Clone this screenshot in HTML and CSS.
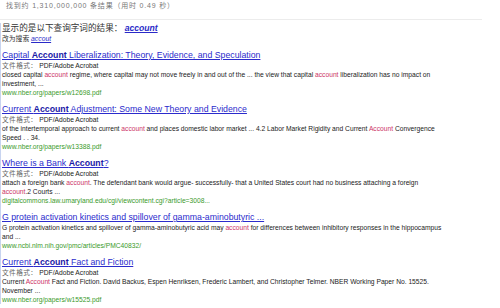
FILE: index.html
```html
<!DOCTYPE html>
<html lang="zh-CN">
<head>
    <meta charset="UTF-8">
    <title>account - 搜索结果</title>
    <link rel="stylesheet" href="styles.css">
</head>
<body>
    <div class="stats">找到约 1,310,000,000 条结果（用时 0.49 秒）</div>

    <div class="main">
        <div class="spell">显示的是以下查询字词的结果： <a href="#" class="kw">account</a></div>
        <div class="spell-alt">改为搜索 <a href="#" class="kw">accout</a></div>

        <div class="result">
            <a href="#" class="title">Capital <b>Account</b> Liberalization: Theory, Evidence, and Speculation</a>
            <div class="line"><span class="ftype">文件格式：</span> PDF/Adobe Acrobat</div>
            <div class="line">closed capital <em>account</em> regime, where capital may not move freely in and out of the ... the view that capital <em>account</em> liberalization has no impact on</div>
            <div class="line">investment, ...</div>
            <div class="line url">www.nber.org/papers/w12698.pdf</div>
        </div>

        <div class="result">
            <a href="#" class="title">Current <b>Account</b> Adjustment: Some New Theory and Evidence</a>
            <div class="line"><span class="ftype">文件格式：</span> PDF/Adobe Acrobat</div>
            <div class="line">of the intertemporal approach to current <em>account</em> and places domestic labor market ... 4.2 Labor Market Rigidity and Current <em>Account</em> Convergence</div>
            <div class="line">Speed . . 34.</div>
            <div class="line url">www.nber.org/papers/w13388.pdf</div>
        </div>

        <div class="result">
            <a href="#" class="title">Where is a Bank <b>Account</b>?</a>
            <div class="line"><span class="ftype">文件格式：</span> PDF/Adobe Acrobat</div>
            <div class="line">attach a foreign bank <em>account</em>. The defendant bank would argue- successfully- that a United States court had no business attaching a foreign</div>
            <div class="line"><em>account</em>.2 Courts ...</div>
            <div class="line url">digitalcommons.law.umaryland.edu/cgi/viewcontent.cgi?article=3008...</div>
        </div>

        <div class="result">
            <a href="#" class="title">G protein activation kinetics and spillover of gamma-aminobutyric ...</a>
            <div class="line">G protein activation kinetics and spillover of gamma-aminobutyric acid may <em>account</em> for differences between inhibitory responses in the hippocampus</div>
            <div class="line">and ...</div>
            <div class="line url">www.ncbi.nlm.nih.gov/pmc/articles/PMC40832/</div>
        </div>

        <div class="result">
            <a href="#" class="title">Current <b>Account</b> Fact and Fiction</a>
            <div class="line"><span class="ftype">文件格式：</span> PDF/Adobe Acrobat</div>
            <div class="line">Current <em>Account</em> Fact and Fiction. David Backus, Espen Henriksen, Frederic Lambert, and Christopher Telmer. NBER Working Paper No. 15525.</div>
            <div class="line">November ...</div>
            <div class="line url">www.nber.org/papers/w15525.pdf</div>
        </div>
    </div>
</body>
</html>
```

FILE: styles.css
```css
body {
    margin: 0;
    background: #fff;
    font-family: "Liberation Sans", Arial, "Noto Sans CJK SC", sans-serif;
    color: #222;
}
.stats {
    width: 476px;
    height: 19px;
    padding-left: 6px;
    line-height: 12px;
    font-size: 7px;
    letter-spacing: 0.8px;
    color: #777;
    border-bottom: 1px solid #ececec;
}
.main {
    border-left: 1px solid #c8d4f0;
    padding-left: 1px;
    width: 480px;
}
.spell {
    margin-top: 3px;
    line-height: 11px;
    font-size: 8.6px;
    color: #333;
}
.spell-alt {
    line-height: 9px;
    font-size: 6.8px;
    color: #333;
}
.kw {
    color: #2a2ac8;
    font-style: italic;
    font-weight: bold;
}
.spell-alt .kw {
    font-weight: normal;
}
.result {
    margin-top: 6px;
}
.title {
    display: block;
    line-height: 12px;
    font-size: 8.75px;
    color: #2b2bcc;
    white-space: nowrap;
}
.title b {
    color: #1a1aa6;
}
.line {
    line-height: 9px;
    font-size: 6.7px;
    color: #222;
    white-space: nowrap;
}
.line em {
    font-style: normal;
    color: #cc3366;
}
.ftype {
    color: #666;
    font-size: 6.7px;
    letter-spacing: 0.4px;
}
.url {
    color: #3a9a2a;
}
```
